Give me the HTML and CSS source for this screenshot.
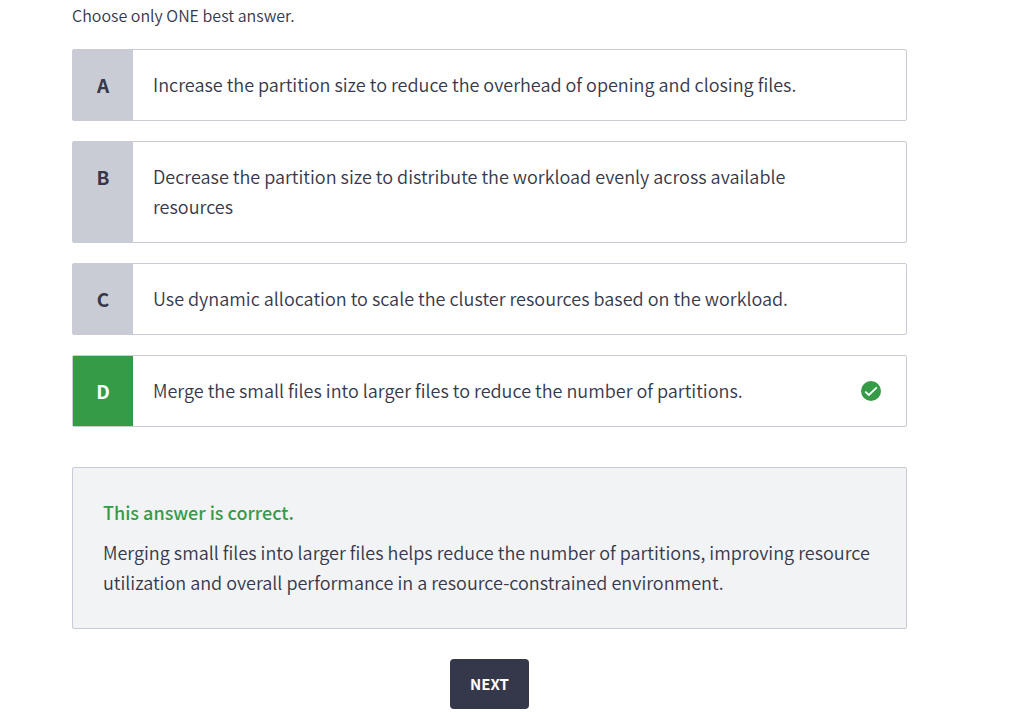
FILE: index.html
```html
<!DOCTYPE html>
<html lang="en">
<head>
<meta charset="utf-8">
<meta name="viewport" content="width=device-width, initial-scale=1">
<title>Question</title>
<link rel="stylesheet" href="styles.css">
</head>
<body>
<main class="quiz">
  <p class="hint">Choose only ONE best answer.</p>
  <div class="options">
    <button type="button" class="option"><span class="letter">A</span><span class="text">Increase the partition size to reduce the overhead of opening and closing files.</span></button>
    <button type="button" class="option"><span class="letter">B</span><span class="text">Decrease the partition size to distribute the workload evenly across available resources</span></button>
    <button type="button" class="option"><span class="letter">C</span><span class="text">Use dynamic allocation to scale the cluster resources based on the workload.</span></button>
    <button type="button" class="option correct"><span class="letter">D</span><span class="text">Merge the small files into larger files to reduce the number of partitions.</span>
      <svg class="check" viewBox="0 0 20 20" aria-hidden="true"><circle cx="10" cy="10" r="10" fill="#369b47"/><path d="M4.2 10.6 7.9 14 15.8 6.4" fill="none" stroke="#fff" stroke-width="1.8"/></svg></button>
  </div>
  <section class="explanation">
    <h2 class="verdict">This answer is correct.</h2>
    <p class="reason">Merging small files into larger files helps reduce the number of partitions, improving resource utilization and overall performance in a resource-constrained environment.</p>
  </section>
  <button type="button" class="next">NEXT</button>
</main>
</body>
</html>
```
FILE: styles.css
```css
* {
  box-sizing: border-box;
}

body {
  margin: 0;
  background: #fff;
  color: #35374a;
  font-family: "Source Sans Pro", "Noto Sans CJK SC", sans-serif;
  font-size: 18px;
  font-weight: 350;
  line-height: 30px;
}

button {
  font: inherit;
  color: inherit;
  cursor: pointer;
}

.quiz {
  display: flex;
  flex-direction: column;
  margin: 0 109px 0 72px;
}

.hint {
  margin: 3px 0 22px;
  font-size: 16px;
  line-height: 24px;
}

.options {
  display: flex;
  flex-direction: column;
  gap: 20px;
}

.option {
  display: flex;
  padding: 0;
  border: 1px solid #c9cbd5;
  border-radius: 2px;
  background: #fff;
  text-align: left;
}

.letter {
  flex: none;
  align-self: stretch;
  width: 60px;
  padding: 20px 0;
  background: #c9cbd5;
  font-size: 19px;
  font-weight: 700;
  text-align: center;
}

.text {
  flex: 1;
  padding: 19px 70px 21px 20px;
}

.correct .letter {
  background: #369b47;
  color: #fff;
}

.correct .text {
  padding-right: 25px;
}

.check {
  flex: none;
  align-self: center;
  width: 20px;
  height: 20px;
  margin-right: 25px;
}

.explanation {
  margin-top: 40px;
  padding: 29px 24px 31px 30px;
  border: 1px solid #c9cbd5;
  border-radius: 2px;
  background: #f2f3f5;
}

.verdict {
  margin: 0 0 10px;
  color: #369b47;
  font-size: 18px;
  font-weight: 500;
}

.reason {
  margin: 0;
}

.next {
  align-self: center;
  margin-top: 30px;
  padding: 10px 20px;
  border: 0;
  border-radius: 4px;
  background: #35374a;
  color: #fff;
  font-size: 15px;
  font-weight: 700;
}
```
